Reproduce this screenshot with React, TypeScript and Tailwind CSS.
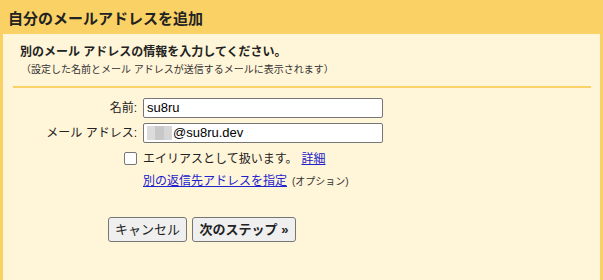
export default function App() {
    return (
        <div className="w-[603px] h-[280px] overflow-hidden bg-[#fad165] text-[#222] font-['Liberation_Sans','Noto_Sans_CJK_JP',sans-serif]">
            {/* Title bar */}
            <div className="h-[34px] flex items-center pl-[8px] pt-[5px]">
                <h1 className="text-[15px] font-bold text-[#222]">自分のメールアドレスを追加</h1>
            </div>

            {/* Body */}
            <div className="mx-[3px] h-[246px] bg-[#fff5d8]">
                <div className="pt-[9px] pl-[17px]">
                    <div className="text-[12px] font-bold leading-[18px]">別のメール アドレスの情報を入力してください。</div>
                    <div className="text-[10px] leading-[16px] mt-[1px] pl-[1px] text-[#333]">（設定した名前とメール アドレスが送信するメールに表示されます）</div>
                </div>
                <div className="mt-[8px] ml-[10px] w-[578px] h-[2px] bg-[#fad165]" />

                {/* Form */}
                <div className="mt-[10px] flex flex-col gap-[5px]">
                    <div className="flex items-center h-[20px]">
                        <label className="w-[134px] text-right text-[12px]">名前:</label>
                        <div className="ml-[6px] w-[240px] h-[20px] bg-white border border-[#767676] rounded-[2px] flex items-center px-[3px] text-[13px] text-black">su8ru</div>
                    </div>
                    <div className="flex items-center h-[20px]">
                        <label className="w-[134px] text-right text-[12px]">メール アドレス:</label>
                        <div className="ml-[6px] w-[240px] h-[20px] bg-white border border-[#767676] rounded-[2px] flex items-center px-[3px] text-[13px] text-black">
                            <span className="flex h-[14px] mr-[1px]">
                                <span className="w-[8px] bg-[#dcdcdc]" />
                                <span className="w-[9px] bg-[#c8c8c8]" />
                                <span className="w-[8px] bg-[#d6d6d6]" />
                            </span>
                            @su8ru.dev
                        </div>
                    </div>
                </div>

                <div className="mt-[9px] flex items-center h-[13px] text-[12px]">
                    <span className="ml-[121px] w-[13px] h-[13px] bg-white border border-[#767676] rounded-[2px]" />
                    <span className="ml-[6px]">エイリアスとして扱います。</span>
                    <a className="ml-[4px] text-[#2222cc] underline">詳細</a>
                </div>

                <div className="mt-[9px] flex items-center h-[14px] pl-[140px]">
                    <a className="text-[12px] text-[#2222cc] underline">別の返信先アドレスを指定</a>
                    <span className="ml-[5px] text-[10px] text-[#333]">(オプション)</span>
                </div>

                <div className="mt-[29px] flex gap-[5px] pl-[105px]">
                    <button className="w-[79px] h-[25px] bg-[#efefef] border border-[#767676] rounded-[3px] text-[13px] text-[#222]">キャンセル</button>
                    <button className="w-[104px] h-[25px] bg-[#efefef] border border-[#767676] rounded-[3px] text-[13px] font-bold text-[#222]">次のステップ »</button>
                </div>
            </div>
        </div>
    );
}
